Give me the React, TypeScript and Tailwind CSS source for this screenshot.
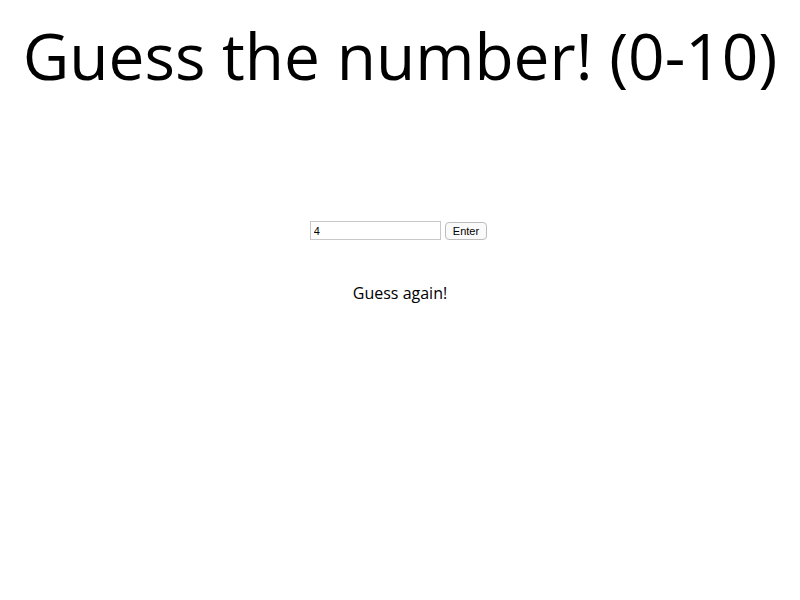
import { useState } from "react";

export default function App() {
  const [guess, setGuess] = useState("4");
  const [message, setMessage] = useState("Guess again!");
  const target = 7;

  const check = () => {
    const n = parseInt(guess, 10);
    setMessage(n === target ? "You got it!" : "Guess again!");
  };

  return (
    <div className="min-h-screen bg-white text-black font-['Open_Sans',sans-serif]">
      <h1 className="text-center text-[64px] leading-[88px] pt-[12px]">Guess the number! (0-10)</h1>
      <div className="flex justify-center items-center gap-[4px] mt-[121px] pr-[3px]">
        <input
          value={guess}
          onChange={(e) => setGuess(e.target.value)}
          className="w-[131px] h-[19px] border border-[#c8c8c8] px-[3px] text-[11px] font-['Liberation_Sans',sans-serif] outline-none"
        />
        <button
          onClick={check}
          className="h-[18px] px-[7px] pt-[1px] border border-[#bdbdbd] rounded-[4px] bg-[#fafafa] text-[11px] leading-none font-['Liberation_Sans',sans-serif]"
        >
          Enter
        </button>
      </div>
      <p className="text-center text-[16px] mt-[41px]">{message}</p>
    </div>
  );
}
